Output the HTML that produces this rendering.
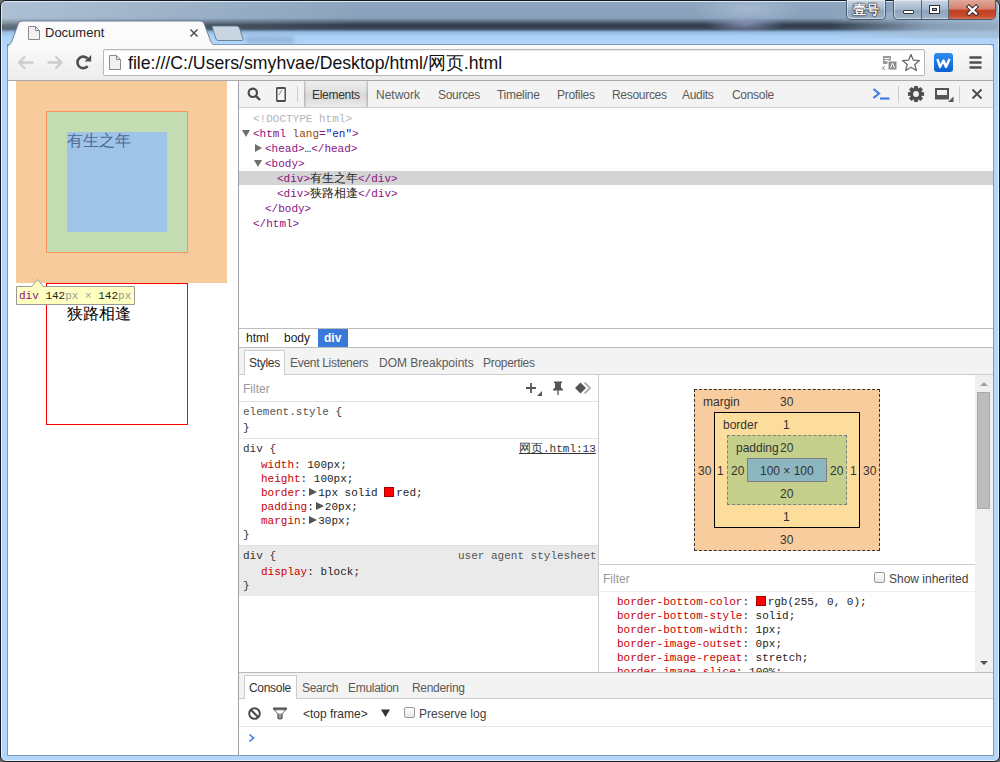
<!DOCTYPE html>
<html><head><meta charset="utf-8">
<style>
*{margin:0;padding:0;box-sizing:border-box}
html,body{width:1000px;height:762px;overflow:hidden;background:#6a6a6a}
body{position:relative;font-family:"Liberation Sans",sans-serif;font-size:12px;color:#222}
.a{position:absolute}
.mono{font-family:"Liberation Mono",monospace}
/* frame */
#frame{left:0;top:0;width:1000px;height:762px;border:1px solid #131a22;border-radius:6px;box-shadow:inset 0 0 0 1px rgba(235,247,255,.85);
 background:linear-gradient(to bottom,#8ea6bf 0,#89a2bc 17px,#61768c 20px,#2e3a48 24px,#3a4a5c 28px,#93b8dd 31px,#abd1f6 35px,#b3d6fa 44px,#b3d6fa 100%)}
#frameIn{left:7px;top:44px;width:987px;height:712px;border:1px solid #7f9bb8}
#glow{left:1px;top:1px;width:360px;height:36px;-webkit-mask-image:linear-gradient(to bottom,#000 22px,transparent 34px);border-radius:5px 0 0 0;background:linear-gradient(to right,rgba(225,235,245,.4),rgba(225,235,245,.3) 25%,rgba(225,235,245,0))}
</style></head><body>
<div class="a" id="frame"></div>
<div class="a" id="glow"></div>
<div class="a" id="frameIn"></div>
<div class="a" style="left:660px;top:1px;width:180px;height:22px;background:radial-gradient(ellipse 55px 16px at 88px 8px,rgba(200,215,235,.4),rgba(200,215,235,0))"></div>
<div class="a" style="left:600px;top:12px;width:399px;height:26px;background:radial-gradient(ellipse 40px 9px at 145px 12px,rgba(150,160,200,.75),rgba(150,160,200,0)),linear-gradient(to right,rgba(165,190,215,0) 230px,rgba(165,190,215,.75) 330px,rgba(165,190,215,.85))"></div>
<div class="a" style="left:246px;top:37px;width:48px;height:6px;background:rgba(40,60,90,.22);filter:blur(2px)"></div>
<!-- title bar: tab -->
<svg class="a" style="left:0;top:18px" width="260" height="28">
 <path d="M7,28 C9.5,27.5 11,26 12,23.5 L18,6.5 C19,4 20,3 23,3 L199.5,3 C202.5,3 203.5,4 204.5,6.5 L211,23.5 C212,26 213.5,27.5 216,28 Z" fill="#fbfbfb"/><path d="M7,27.5 C9.5,27 11,25.5 12,23 L18,6.5 C19,4 20,3 23,3 L199.5,3 C202.5,3 203.5,4 204.5,6.5 L210.5,23 C211.5,25.5 213.5,27 216,27.5" fill="none" stroke="#6f8296" stroke-width="1"/>
 <path d="M213,8 L236,8 C238,8 239,9 239.5,10 L243,21 C243.3,22 243,22.5 242,22.5 L219,22.5 C217,22.5 216.5,22 216,21 L212.5,10 C212,9 212,8 213,8 Z" fill="#c9d5e1" stroke="#5c7189" stroke-width="0.8"/>
</svg>
<!-- tab page icon -->
<svg class="a" style="left:27px;top:25px" width="14" height="16"><path d="M1.5,1.5 L8.5,1.5 L12.5,5.5 L12.5,14.5 L1.5,14.5 Z" fill="#f1f1f1" stroke="#8a8a8a"/><path d="M8.5,1.5 L8.5,5.5 L12.5,5.5" fill="none" stroke="#8a8a8a"/></svg>
<div class="a" style="left:45px;top:24px;font-size:13px;color:#1e1e1e;line-height:17px">Document</div>
<svg class="a" style="left:189px;top:28px" width="10" height="10"><path d="M1.5,1.5 L8.5,8.5 M8.5,1.5 L1.5,8.5" stroke="#505050" stroke-width="1.5"/></svg>

<!-- window buttons -->
<div class="a" style="left:846px;top:0;width:40px;height:20px;border:1px solid #4b5a6b;border-top:none;border-radius:0 0 5px 5px;background:linear-gradient(#c9d6e4,#a3b6ca 50%,#8ea3b9 51%,#9fb4c8);box-shadow:inset 0 0 0 1px rgba(255,255,255,.45)"></div>
<div class="a" style="left:850px;top:2px;width:32px;font-size:13px;line-height:16px;color:#fff;text-align:center;font-weight:bold;text-shadow:0 0 1px #000,0 0 1px #000,0 0 2px #223">壹号</div>
<div class="a" style="left:893px;top:0;width:103px;height:20px;border:1px solid #4b5a6b;border-top:none;border-radius:0 0 5px 5px;overflow:hidden;background:linear-gradient(#c9d6e4,#a3b6ca 50%,#8ea3b9 51%,#9fb4c8);box-shadow:inset 0 0 0 1px rgba(255,255,255,.45)">
 <div class="a" style="left:27px;top:0;width:1px;height:20px;background:#5a6a7a"></div>
 <div class="a" style="left:54px;top:0;width:1px;height:20px;background:#5a6a7a"></div>
 <div class="a" style="left:55px;top:0;width:48px;height:20px;background:linear-gradient(#e0a89a,#d4806c 45%,#c2401f 52%,#c84a2c 80%,#de8064)"></div>
</div>
<div class="a" style="left:903px;top:10px;width:11px;height:4px;background:#fff;border:1px solid #333;border-radius:1px"></div>
<div class="a" style="left:929px;top:5px;width:11px;height:9px;border:1px solid #333;background:#fff"><div class="a" style="left:2px;top:2px;width:5px;height:3px;background:#9aa8b8;border:1px solid #333"></div></div>
<svg class="a" style="left:965px;top:4px" width="15" height="13"><path d="M4,3 L11,9.5 M11,3 L4,9.5" stroke="#3a2a2a" stroke-width="4.4" stroke-linecap="square"/><path d="M4,3 L11,9.5 M11,3 L4,9.5" stroke="#fff" stroke-width="2.3" stroke-linecap="square"/></svg>

<!-- toolbar -->
<div class="a" style="left:8px;top:45px;width:985px;height:36px;background:linear-gradient(#fbfbfb,#ececec);border-bottom:1px solid #a9a9a9;border-radius:4px 4px 0 0"></div>

<!-- nav toolbar -->
<svg class="a" style="left:16px;top:54px" width="50" height="16">
 <path d="M3.5,8.5 H16.5 M8.5,3 L3,8.5 L8.5,14" fill="none" stroke="#cdcdcd" stroke-width="2.3" stroke-linecap="round" stroke-linejoin="round"/>
 <path d="M32.5,8.5 H45.5 M40,3 L45.5,8.5 L40,14" fill="none" stroke="#cdcdcd" stroke-width="2.3" stroke-linecap="round" stroke-linejoin="round"/>
</svg>
<svg class="a" style="left:75px;top:54px" width="18" height="18">
 <path d="M12.6,4.7 A5.75,5.75 0 1 0 12.6,12.1" fill="none" stroke="#505050" stroke-width="2.6"/>
 <path d="M16.2,1 L16.2,7.6 L9.6,7.6 Z" fill="#505050"/>
</svg>
<div class="a" style="left:103px;top:49px;width:822px;height:27px;background:#fff;border:1px solid #b8b8b8;border-radius:2px;box-shadow:inset 0 1px 0 #eee"></div>
<svg class="a" style="left:108px;top:54px" width="14" height="17"><path d="M1.5,1.5 L8.5,1.5 L12.5,5.5 L12.5,15.5 L1.5,15.5 Z" fill="#f1f1f1" stroke="#8a8a8a"/><path d="M8.5,1.5 L8.5,5.5 L12.5,5.5" fill="none" stroke="#8a8a8a"/></svg>
<div class="a" style="left:128px;top:53px;font-size:17.7px;line-height:21px;color:#111">file:///C:/Users/smyhvae/Desktop/html/网页.html</div>
<!-- translate icon -->
<svg class="a" style="left:881px;top:55px" width="18" height="17">
 <rect x="2" y="1" width="8" height="8" fill="#9a9a9a"/><path d="M3.5,3.5 H8.5 M3.5,5.5 H7" stroke="#fff" stroke-width="1"/>
 <rect x="7" y="6" width="9" height="9" fill="#8a8a8a" stroke="#fff" stroke-width="1"/><path d="M9.5,13 L11.5,8 L13.5,13" fill="none" stroke="#fff" stroke-width="1"/>
 <path d="M1,12 L4,15 M3.5,11 L1.5,15" stroke="#9a9a9a" stroke-width="1"/>
</svg>
<svg class="a" style="left:901px;top:53px" width="20" height="19"><path d="M10,1.5 L12.4,7.2 L18.5,7.6 L13.8,11.5 L15.3,17.5 L10,14.2 L4.7,17.5 L6.2,11.5 L1.5,7.6 L7.6,7.2 Z" fill="#fff" stroke="#6a6a6a" stroke-width="1.3" stroke-linejoin="round"/></svg>
<div class="a" style="left:934px;top:53px;width:19px;height:19px;border-radius:3px;background:linear-gradient(#2f8ef0,#0a5fd0)"></div>
<svg class="a" style="left:934px;top:53px" width="19" height="19"><path d="M3.5,6 L6,14 L9.5,7.5 L12,14 L15.5,6" fill="none" stroke="#fff" stroke-width="2.4" stroke-linejoin="round"/></svg>
<svg class="a" style="left:968px;top:55px" width="15" height="15"><path d="M2.5,2.5 H12.5 M2.5,7.5 H12.5 M2.5,12.5 H12.5" stroke="#505050" stroke-width="2.6" stroke-linecap="round"/></svg>
<!-- page viewport -->
<div class="a" style="left:8px;top:81px;width:230px;height:674px;background:#fff"></div>

<!-- page content -->
<div class="a" style="left:16px;top:81px;width:211px;height:202px;background:#f8cb9c"></div>
<div class="a" style="left:46px;top:111px;width:142px;height:142px;background:#c3dcb2;border:1px solid #f8955f"></div>
<div class="a" style="left:67px;top:132px;width:100px;height:100px;background:#a0c4e8"></div>
<div class="a" style="left:67px;top:131px;font-size:16px;line-height:19px;color:#4c6d95;font-weight:300">有生之年</div>
<div class="a" style="left:46px;top:283px;width:142px;height:142px;border:1px solid #f00"></div>
<div class="a" style="left:67px;top:304px;font-size:16px;line-height:19px;color:#000;font-weight:300">狭路相逢</div>
<!-- tooltip -->
<svg class="a" style="left:16px;top:278px" width="120" height="28">
 <path d="M0.5,8.5 L15.5,8.5 L21.5,1.5 L27.5,8.5 L118.5,8.5 L118.5,26.5 L0.5,26.5 Z" fill="#ffffc2" stroke="#999" stroke-width="1"/>
</svg>
<div class="a mono" style="left:19px;top:290px;font-size:11px;line-height:13px;white-space:pre"><span style="color:#881280">div</span> <span style="color:#222">142</span><span style="color:#999">px × </span><span style="color:#222">142</span><span style="color:#999">px</span></div>
<!-- devtools -->
<div class="a" style="left:238px;top:81px;width:755px;height:674px;background:#fff;border-left:1px solid #a0a0a0"></div>

<!-- devtools toolbar -->
<div class="a" style="left:239px;top:81px;width:754px;height:27px;background:#f3f3f3;border-bottom:1px solid #cdcdcd"></div>
<svg class="a" style="left:246px;top:86px" width="16" height="16"><circle cx="6.8" cy="6.8" r="4.2" fill="none" stroke="#4a4a4a" stroke-width="2.1"/><path d="M9.8,9.8 L14,14" stroke="#4a4a4a" stroke-width="2.4"/></svg>
<svg class="a" style="left:275px;top:86px" width="12" height="17"><rect x="1.75" y="1.75" width="8.5" height="13.5" rx="1" fill="#f6f6f6" stroke="#4e4e4e" stroke-width="1.5"/><path d="M1.5,2.2 H10.5 M1.5,14.8 H10.5" stroke="#4e4e4e" stroke-width="1.6"/><path d="M3.8,9 L7,4" stroke="#8a8a8a" stroke-width="1"/></svg>
<div class="a" style="left:297px;top:86px;width:1px;height:16px;background:#ccc"></div>
<div class="a" style="left:304px;top:81px;width:64px;height:26px;background:linear-gradient(to right,rgba(0,0,0,.28) 0,rgba(0,0,0,.08) 1px,rgba(0,0,0,0) 3px,rgba(0,0,0,0) 61px,rgba(0,0,0,.08) 63px,rgba(0,0,0,.28) 64px),linear-gradient(#efefef,#e2e2e2 35%,#d8d8d8 55%,#e4e4e4 85%,#ececec)"></div>
<div class="a" style="left:312px;top:88px;line-height:15px;color:#333;letter-spacing:-0.3px">Elements</div>
<div class="a" style="left:376px;top:88px;line-height:15px;color:#5a5a5a">Network</div>
<div class="a" style="left:438px;top:88px;line-height:15px;color:#5a5a5a;letter-spacing:-0.3px">Sources</div>
<div class="a" style="left:497px;top:88px;line-height:15px;color:#5a5a5a;letter-spacing:-0.3px">Timeline</div>
<div class="a" style="left:557px;top:88px;line-height:15px;color:#5a5a5a;letter-spacing:-0.3px">Profiles</div>
<div class="a" style="left:612px;top:88px;line-height:15px;color:#5a5a5a;letter-spacing:-0.3px">Resources</div>
<div class="a" style="left:682px;top:88px;line-height:15px;color:#5a5a5a;letter-spacing:-0.3px">Audits</div>
<div class="a" style="left:732px;top:88px;line-height:15px;color:#5a5a5a;letter-spacing:-0.3px">Console</div>
<svg class="a" style="left:871px;top:87px" width="20" height="14"><path d="M2.5,2 L8,6.5 L2.5,11" fill="none" stroke="#3b7de3" stroke-width="2.2"/><path d="M9,11.5 H18.5" stroke="#3b7de3" stroke-width="2.2"/></svg>
<div class="a" style="left:898px;top:86px;width:1px;height:17px;background:#ccc"></div>
<svg class="a" style="left:907px;top:85px" width="18" height="18" viewBox="0 0 18 18"><path fill="#4e4e4e" fill-rule="evenodd" d="M14.62,6.89 L17.10,7.19 L17.10,10.81 L14.62,11.11 L14.47,11.48 L16.01,13.45 L13.45,16.01 L11.48,14.47 L11.11,14.62 L10.81,17.10 L7.19,17.10 L6.89,14.62 L6.52,14.47 L4.55,16.01 L1.99,13.45 L3.53,11.48 L3.38,11.11 L0.90,10.81 L0.90,7.19 L3.38,6.89 L3.53,6.52 L1.99,4.55 L4.55,1.99 L6.52,3.53 L6.89,3.38 L7.19,0.90 L10.81,0.90 L11.11,3.38 L11.48,3.53 L13.45,1.99 L16.01,4.55 L14.47,6.52 Z M11.90,9.00 A2.90,2.90 0 1 0 6.10,9.00 A2.90,2.90 0 1 0 11.90,9.00 Z"/></svg>
<svg class="a" style="left:934px;top:87px" width="21" height="16"><rect x="1" y="1" width="14" height="11.5" fill="#555"/><rect x="3" y="3" width="10" height="5" fill="#f3f3f3"/><path d="M14,15 L19.5,15 L19.5,9.5 Z" fill="#555"/></svg>
<div class="a" style="left:959px;top:86px;width:1px;height:17px;background:#ccc"></div>
<svg class="a" style="left:971px;top:88px" width="12" height="12"><path d="M1.5,1.5 L10.5,10.5 M10.5,1.5 L1.5,10.5" stroke="#4a4a4a" stroke-width="1.8"/></svg>

<!-- DOM tree -->
<div class="a mono" style="left:239px;top:171px;width:754px;height:14px;background:#d4d4d4"></div>
<div class="a mono" style="left:242px;top:112px;font-size:11px;line-height:15px;white-space:pre;color:#881280"><div style="padding-left:11px;color:#b4b4b4">&lt;!DOCTYPE html&gt;</div><div><span style="display:inline-block;width:11px;height:8px;position:relative"><i style="position:absolute;left:0;top:1px;border-left:4px solid transparent;border-right:4px solid transparent;border-top:7px solid #6e6e6e"></i></span>&lt;html <span style="color:#994500">lang</span>=<span style="color:#1a1aa6">"en"</span>&gt;</div><div style="padding-left:12px"><span style="display:inline-block;width:11px;height:8px;position:relative"><i style="position:absolute;left:1px;top:0px;border-top:4px solid transparent;border-bottom:4px solid transparent;border-left:7px solid #6e6e6e"></i></span>&lt;head&gt;<span style="color:#222">…</span>&lt;/head&gt;</div><div style="padding-left:12px"><span style="display:inline-block;width:11px;height:8px;position:relative"><i style="position:absolute;left:0;top:1px;border-left:4px solid transparent;border-right:4px solid transparent;border-top:7px solid #6e6e6e"></i></span>&lt;body&gt;</div><div style="padding-left:35px">&lt;div&gt;<span style="color:#222;font-size:12px;font-weight:300">有生之年</span>&lt;/div&gt;</div><div style="padding-left:35px">&lt;div&gt;<span style="color:#222;font-size:12px;font-weight:300">狭路相逢</span>&lt;/div&gt;</div><div style="padding-left:23px">&lt;/body&gt;</div><div style="padding-left:11px">&lt;/html&gt;</div></div>

<!-- breadcrumbs -->
<div class="a" style="left:239px;top:328px;width:754px;height:20px;background:#fff;border-top:1px solid #bdbdbd;border-bottom:1px solid #bdbdbd"></div>
<div class="a" style="left:246px;top:330px;line-height:16px;color:#222">html</div>
<div class="a" style="left:284px;top:330px;line-height:16px;color:#222">body</div>
<div class="a" style="left:318px;top:329px;width:30px;height:18px;background:#3879d9"></div>
<div class="a" style="left:324px;top:330px;line-height:16px;color:#fff;font-weight:bold">div</div>

<!-- sidebar tabs -->
<div class="a" style="left:239px;top:348px;width:754px;height:27px;background:#f3f3f3;border-bottom:1px solid #ccc"></div>
<div class="a" style="left:244px;top:350px;width:41px;height:25px;background:#fff;border:1px solid #ccc;border-bottom:none"></div>
<div class="a" style="left:249px;top:356px;line-height:15px;color:#333;letter-spacing:-0.3px">Styles</div>
<div class="a" style="left:290px;top:356px;line-height:15px;color:#5a5a5a;letter-spacing:-0.3px">Event Listeners</div>
<div class="a" style="left:379px;top:356px;line-height:15px;color:#5a5a5a">DOM Breakpoints</div>
<div class="a" style="left:483px;top:356px;line-height:15px;color:#5a5a5a;letter-spacing:-0.3px">Properties</div>
<!-- styles pane -->
<div class="a" style="left:598px;top:375px;width:1px;height:297px;background:#ccc"></div>
<div class="a" style="left:243px;top:382px;line-height:15px;color:#999">Filter</div>
<svg class="a" style="left:524px;top:381px" width="19" height="16"><path d="M7,2 V12 M2,7 H12" stroke="#555" stroke-width="1.8"/><path d="M18,10 L18,15 L13,15 Z" fill="#555"/></svg>
<svg class="a" style="left:551px;top:380px" width="14" height="16"><path d="M3,1.5 H11 V3 H10 V7.5 L12,9.5 V10.5 H2 V9.5 L4,7.5 V3 H3 Z" fill="#555"/><path d="M7,10 V15" stroke="#555" stroke-width="1.3"/></svg>
<svg class="a" style="left:574px;top:381px" width="20" height="14"><path d="M10.5,1.5 L16,7 L10.5,12.5" fill="none" stroke="#b0b0b0" stroke-width="2"/><path d="M1,7 L6.5,1.5 L12,7 L6.5,12.5 Z" fill="#555"/></svg>
<div class="a" style="left:239px;top:401px;width:359px;height:1px;background:#e0e0e0"></div>
<div class="a mono" style="left:243px;top:405px;font-size:11px;line-height:15px;white-space:pre;color:#333"><span style="color:#555">element.style</span> {</div>
<div class="a mono" style="left:243px;top:421px;font-size:11px;line-height:15px;color:#333">}</div>
<div class="a" style="left:239px;top:438px;width:359px;height:1px;background:#e4e4e4"></div>
<div class="a mono" style="left:243px;top:442px;font-size:11px;line-height:15px;white-space:pre;color:#333">div {</div>
<div class="a mono" style="left:519px;top:442px;font-size:11px;line-height:15px;white-space:pre;color:#333;text-decoration:underline"><span style="font-size:12px;font-weight:300">网页</span>.html:13</div>
<div class="a mono" style="left:261px;top:458px;font-size:11px;line-height:14px;white-space:pre;color:#222"><div><span style="color:#c80000">width</span>: 100px;</div><div><span style="color:#c80000">height</span>: 100px;</div><div><span style="color:#c80000">border</span>:<i style="display:inline-block;width:11px;height:9px;position:relative;vertical-align:-1px"><i style="position:absolute;left:2px;top:0;border-top:4.5px solid transparent;border-bottom:4.5px solid transparent;border-left:8px solid #555"></i></i>1px solid <i style="display:inline-block;width:10px;height:10px;background:#f00;border:1px solid #a00;vertical-align:-1px;margin-right:2px"></i>red;</div><div><span style="color:#c80000">padding</span>:<i style="display:inline-block;width:11px;height:9px;position:relative;vertical-align:-1px"><i style="position:absolute;left:2px;top:0;border-top:4.5px solid transparent;border-bottom:4.5px solid transparent;border-left:8px solid #555"></i></i>20px;</div><div><span style="color:#c80000">margin</span>:<i style="display:inline-block;width:11px;height:9px;position:relative;vertical-align:-1px"><i style="position:absolute;left:2px;top:0;border-top:4.5px solid transparent;border-bottom:4.5px solid transparent;border-left:8px solid #555"></i></i>30px;</div></div>
<div class="a mono" style="left:243px;top:528px;font-size:11px;line-height:15px;color:#333">}</div>
<div class="a" style="left:239px;top:545px;width:359px;height:51px;background:#eaeaea;border-top:1px solid #e0e0e0"></div>
<div class="a mono" style="left:243px;top:549px;font-size:11px;line-height:15px;white-space:pre;color:#333">div {</div>
<div class="a mono" style="left:458px;top:549px;font-size:11px;line-height:15px;white-space:pre;color:#555">user agent stylesheet</div>
<div class="a mono" style="left:261px;top:565px;font-size:11px;line-height:15px;white-space:pre;color:#222"><span style="color:#c80000">display</span>: block;</div>
<div class="a mono" style="left:243px;top:579px;font-size:11px;line-height:15px;color:#333">}</div>

<!-- box model -->
<div class="a" style="left:694px;top:389px;width:186px;height:162px;background:#f9cc9d;border:1px dashed #333"></div>
<div class="a" style="left:714px;top:412px;width:146px;height:116px;background:#fddd9b;border:1px solid #000"></div>
<div class="a" style="left:727px;top:435px;width:120px;height:70px;background:#c3cf8a;border:1px dashed #808080"></div>
<div class="a" style="left:747px;top:458px;width:80px;height:24px;background:#8cb6c0;border:1px solid #808080"></div>
<div class="a" style="left:703px;top:395px;line-height:15px;color:#333">margin</div>
<div class="a" style="left:780px;top:395px;line-height:15px;color:#333">30</div>
<div class="a" style="left:723px;top:418px;line-height:15px;color:#333">border</div>
<div class="a" style="left:783px;top:418px;line-height:15px;color:#333">1</div>
<div class="a" style="left:736px;top:441px;line-height:15px;color:#333">padding</div>
<div class="a" style="left:780px;top:441px;line-height:15px;color:#333">20</div>
<div class="a" style="left:760px;top:464px;line-height:15px;color:#333">100 × 100</div>
<div class="a" style="left:698px;top:464px;line-height:15px;color:#333">30</div>
<div class="a" style="left:717px;top:464px;line-height:15px;color:#333">1</div>
<div class="a" style="left:731px;top:464px;line-height:15px;color:#333">20</div>
<div class="a" style="left:830px;top:464px;line-height:15px;color:#333">20</div>
<div class="a" style="left:850px;top:464px;line-height:15px;color:#333">1</div>
<div class="a" style="left:863px;top:464px;line-height:15px;color:#333">30</div>
<div class="a" style="left:780px;top:487px;line-height:15px;color:#333">20</div>
<div class="a" style="left:783px;top:510px;line-height:15px;color:#333">1</div>
<div class="a" style="left:780px;top:533px;line-height:15px;color:#333">30</div>

<!-- computed -->
<div class="a" style="left:599px;top:564px;width:376px;height:1px;background:#ccc"></div>
<div class="a" style="left:603px;top:572px;line-height:15px;color:#999">Filter</div>
<div class="a" style="left:874px;top:572px;width:11px;height:11px;border:1px solid #999;border-radius:2px;background:linear-gradient(#fff,#e8e8e8)"></div>
<div class="a" style="left:889px;top:572px;line-height:15px;color:#444">Show inherited</div>
<div class="a" style="left:599px;top:591px;width:376px;height:1px;background:#eee"></div>
<div class="a" style="left:599px;top:592px;width:376px;height:80px;overflow:hidden">
<div class="a mono" style="left:18px;top:3px;font-size:11px;line-height:14px;white-space:pre;color:#222"><div><span style="color:#c80000">border-bottom-color</span>: <i style="display:inline-block;width:10px;height:10px;background:#f00;border:1px solid #a00;vertical-align:-1px;margin-right:2px"></i>rgb(255, 0, 0);</div><div><span style="color:#c80000">border-bottom-style</span>: solid;</div><div><span style="color:#c80000">border-bottom-width</span>: 1px;</div><div><span style="color:#c80000">border-image-outset</span>: 0px;</div><div><span style="color:#c80000">border-image-repeat</span>: stretch;</div><div><span style="color:#c80000">border-image-slice</span>: 100%;</div></div>
</div>
<!-- scrollbar -->
<div class="a" style="left:975px;top:375px;width:18px;height:297px;background:#f0f0f0"></div>
<div class="a" style="left:977px;top:392px;width:13px;height:117px;background:#bcbcbc;border:1px solid #a8a8a8"></div>
<svg class="a" style="left:978px;top:380px" width="12" height="8"><path d="M2,6 L6,2 L10,6 Z" fill="#a3a3a3"/></svg>
<svg class="a" style="left:978px;top:659px" width="12" height="8"><path d="M2,2 L6,6 L10,2 Z" fill="#505050"/></svg>

<!-- drawer -->
<div class="a" style="left:239px;top:672px;width:754px;height:27px;background:#f3f3f3;border-top:1px solid #bbb;border-bottom:1px solid #ccc"></div>
<div class="a" style="left:244px;top:675px;width:53px;height:24px;background:#fff;border:1px solid #ccc;border-bottom:none"></div>
<div class="a" style="left:249px;top:681px;line-height:15px;color:#333;letter-spacing:-0.3px">Console</div>
<div class="a" style="left:302px;top:681px;line-height:15px;color:#5a5a5a;letter-spacing:-0.3px">Search</div>
<div class="a" style="left:348px;top:681px;line-height:15px;color:#5a5a5a;letter-spacing:-0.3px">Emulation</div>
<div class="a" style="left:412px;top:681px;line-height:15px;color:#5a5a5a;letter-spacing:-0.3px">Rendering</div>
<div class="a" style="left:239px;top:699px;width:754px;height:28px;background:#fff;border-bottom:1px solid #e6e6e6"></div>
<svg class="a" style="left:247px;top:706px" width="15" height="15"><circle cx="7.5" cy="7.5" r="5.3" fill="none" stroke="#4a4a4a" stroke-width="2"/><path d="M3.8,3.8 L11.2,11.2" stroke="#4a4a4a" stroke-width="2"/></svg>
<svg class="a" style="left:272px;top:706px" width="16" height="15"><path d="M1.5,2.5 H14.5 L10,7.5 V12 Q8,13.5 6,12 V7.5 Z" fill="#a0a0a0" stroke="#555" stroke-width="1.3" stroke-linejoin="round"/><path d="M3,4.5 H13 L10,7.5 H6 Z" fill="#fff"/><path d="M1.5,2.5 H14.5" stroke="#555" stroke-width="1.8"/></svg>
<div class="a" style="left:303px;top:707px;line-height:15px;color:#333">&lt;top frame&gt;</div>
<svg class="a" style="left:380px;top:708px" width="11" height="10"><path d="M1,1.5 L10,1.5 L5.5,9 Z" fill="#333"/></svg>
<div class="a" style="left:404px;top:707px;width:11px;height:11px;border:1px solid #999;border-radius:2px;background:linear-gradient(#fff,#e8e8e8)"></div>
<div class="a" style="left:419px;top:707px;line-height:15px;color:#444">Preserve log</div>
<svg class="a" style="left:248px;top:733px" width="8" height="10"><path d="M1.5,1.5 L5.5,5 L1.5,8.5" fill="none" stroke="#367cf1" stroke-width="1.6"/></svg>
</body></html>
